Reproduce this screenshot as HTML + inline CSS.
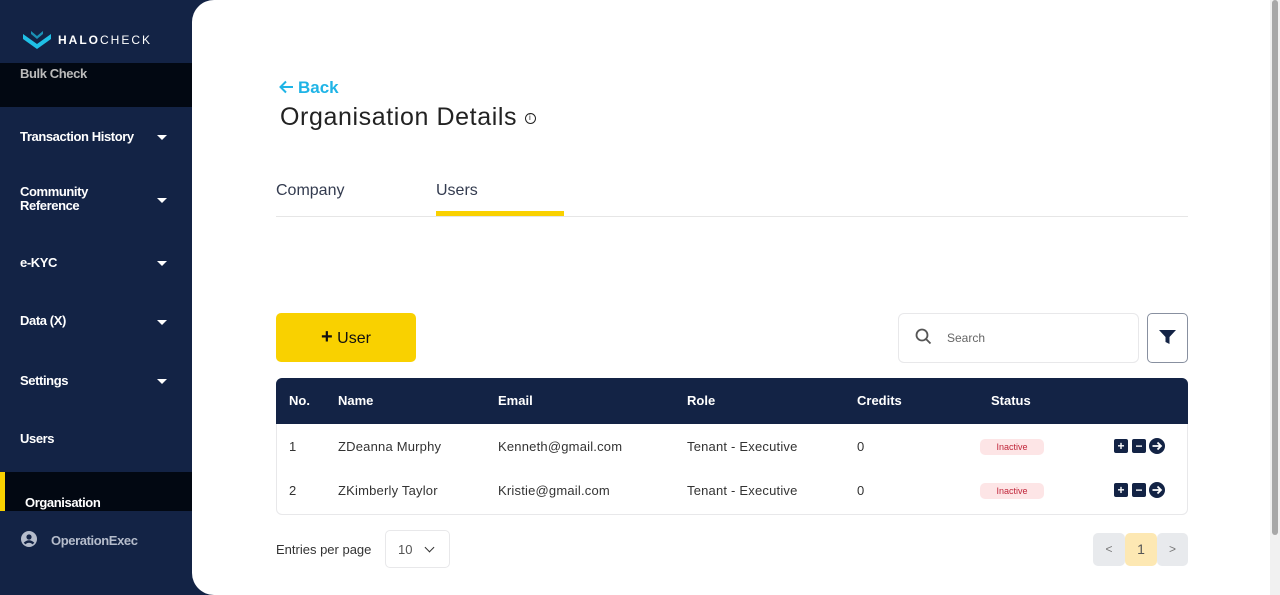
<!DOCTYPE html>
<html><head><meta charset="utf-8"><style>
*{box-sizing:border-box;margin:0;padding:0}
body{width:1280px;height:595px;overflow:hidden;background:#132345;font-family:"Liberation Sans",sans-serif;position:relative}
.sb{position:absolute;left:0;top:0;width:192px;height:595px;background:#132345;color:#fff}
.item{position:absolute;left:20px;font-size:13px;font-weight:bold;color:#fff;letter-spacing:-0.4px}
.car{position:absolute;left:157px;width:0;height:0;border-left:5px solid transparent;border-right:5px solid transparent;border-top:5px solid #fff}
.main{position:absolute;left:192px;top:0;width:1078px;height:595px;background:#fff;border-radius:22px 0 0 22px}
.scroll{position:absolute;left:1270px;top:0;width:10px;height:595px;background:#f1f1f1}
.scroll div{position:absolute;left:2px;top:0;width:6px;height:535px;background:#a8a8a8;border-radius:3px}
.abs{position:absolute}
.badge{position:absolute;width:64px;height:16px;background:#fde5e6;color:#c0263a;font-size:9px;border-radius:5px;text-align:center;line-height:16px}
.ic{position:absolute;width:14px;height:14px;background:#132345;border-radius:2px;color:#fff;font-size:12px;font-weight:bold;text-align:center;line-height:14px}
.ar{position:absolute;width:16px;height:16px}
</style></head><body>
<div class="sb">
 <svg class="abs" style="left:23px;top:31px" width="29" height="19" viewBox="0 0 29 19"><path d="M0 3 L14 13 L28 3 L28 8 L14 18 L0 8Z" fill="#1fc0e6"/><path d="M8 0 L14 5 L20 0 L20 3 L14 8 L8 3Z" fill="#1fc0e6" opacity=".7"/></svg>
 <div class="abs" style="left:58px;top:33px;font-size:12px;color:#fff;letter-spacing:2px"><b>HALO</b>CHECK</div>
 <div class="abs" style="left:0;top:63px;width:192px;height:44px;background:#020812"></div>
 <div class="item" style="top:66px;color:#bbb">Bulk Check</div>
 <div class="item" style="top:129px">Transaction History</div><div class="car" style="top:135px"></div>
 <div class="item" style="top:185px;line-height:14px">Community<br>Reference</div><div class="car" style="top:198px"></div>
 <div class="item" style="top:255px">e-KYC</div><div class="car" style="top:261px"></div>
 <div class="item" style="top:313px">Data (X)</div><div class="car" style="top:320px"></div>
 <div class="item" style="top:373px">Settings</div><div class="car" style="top:379px"></div>
 <div class="item" style="top:431px">Users</div>
 <div class="abs" style="left:0;top:472px;width:192px;height:39px;background:#020812"></div>
 <div class="abs" style="left:0;top:472px;width:5px;height:39px;background:#f9d100"></div>
 <div class="item" style="top:495px;left:25px">Organisation</div>
 <svg class="abs" style="left:21px;top:531px" width="16" height="16" viewBox="0 0 16 16"><circle cx="8" cy="8" r="8" fill="#b5bccb"/><circle cx="8" cy="6" r="2.6" fill="#132345"/><path d="M3.5 12.5 Q8 8.5 12.5 12.5" stroke="#132345" stroke-width="2.4" fill="none"/></svg>
 <div class="item" style="top:533px;left:51px;color:#b5bccb">OperationExec</div>
</div>
<div class="main">
 <svg class="abs" style="left:87px;top:80px" width="15" height="14" viewBox="0 0 15 14"><path d="M14 7H2M7 1.5L1.5 7L7 12.5" stroke="#1fb4e6" stroke-width="2" fill="none"/></svg>
 <div class="abs" style="left:106px;top:78px;color:#1fb4e6;font-size:17px;font-weight:bold">Back</div>
 <div class="abs" style="left:88px;top:103px;color:#222;font-size:25px;letter-spacing:0.6px">Organisation Details <span style="display:inline-block;width:11px;height:11px;border:1.3px solid #222;border-radius:50%;font-size:8px;line-height:8px;text-align:center;vertical-align:middle">i</span></div>
 <div class="abs" style="left:84px;top:182px;color:#333b4f;font-size:16px">Company</div>
 <div class="abs" style="left:244px;top:182px;color:#333b4f;font-size:16px">Users</div>
 <div class="abs" style="left:84px;top:216px;width:912px;height:1px;background:#e6e6e6"></div>
 <div class="abs" style="left:244px;top:211px;width:128px;height:5px;background:#f9d100"></div>
 <div class="abs" style="left:84px;top:313px;width:140px;height:49px;background:#f9d100;border-radius:5px;font-size:16px;color:#111;text-align:center;line-height:49px"><b style="font-size:20px">+</b> User</div>
 <div class="abs" style="left:706px;top:313px;width:241px;height:50px;border:1px solid #e8e8ea;border-radius:6px"></div>
 <svg class="abs" style="left:723px;top:328px" width="17" height="17" viewBox="0 0 17 17"><circle cx="7" cy="7" r="5.5" stroke="#555" stroke-width="1.8" fill="none"/><path d="M11 11 L15.5 15.5" stroke="#555" stroke-width="1.8"/></svg>
 <div class="abs" style="left:755px;top:331px;font-size:12px;color:#666">Search</div>
 <div class="abs" style="left:955px;top:313px;width:41px;height:50px;border:1px solid #8890a0;border-radius:5px"></div>
 <svg class="abs" style="left:967px;top:330px" width="17" height="15" viewBox="0 0 17 15"><path d="M0 0H17L10.5 7V14L6.5 12V7Z" fill="#132345"/></svg>
 <div class="abs" style="left:84px;top:378px;width:912px;height:137px;border:1px solid #e8e8ea;border-radius:6px"></div>
 <div class="abs" style="left:84px;top:378px;width:912px;height:46px;background:#132345;border-radius:6px 6px 0 0"></div>
 <div class="abs" style="top:393px;left:97px;color:#fff;font-size:13px;font-weight:bold">No.</div>
 <div class="abs" style="top:393px;left:146px;color:#fff;font-size:13px;font-weight:bold">Name</div>
 <div class="abs" style="top:393px;left:306px;color:#fff;font-size:13px;font-weight:bold">Email</div>
 <div class="abs" style="top:393px;left:495px;color:#fff;font-size:13px;font-weight:bold">Role</div>
 <div class="abs" style="top:393px;left:665px;color:#fff;font-size:13px;font-weight:bold">Credits</div>
 <div class="abs" style="top:393px;left:799px;color:#fff;font-size:13px;font-weight:bold">Status</div>
 <div style="position:absolute;top:439px;left:0;font-size:13px;color:#333;letter-spacing:0.2px">
  <span class="abs" style="left:97px">1</span><span class="abs" style="left:146px;white-space:nowrap">ZDeanna Murphy</span><span class="abs" style="left:306px">Kenneth@gmail.com</span><span class="abs" style="left:495px;white-space:nowrap">Tenant - Executive</span><span class="abs" style="left:665px">0</span>
 </div>
 <div class="badge" style="left:788px;top:439px">Inactive</div>
 <div style="position:absolute;top:483px;left:0;font-size:13px;color:#333;letter-spacing:0.2px">
  <span class="abs" style="left:97px">2</span><span class="abs" style="left:146px;white-space:nowrap">ZKimberly Taylor</span><span class="abs" style="left:306px">Kristie@gmail.com</span><span class="abs" style="left:495px;white-space:nowrap">Tenant - Executive</span><span class="abs" style="left:665px">0</span>
 </div>
 <div class="badge" style="left:788px;top:483px">Inactive</div>
 <div class="ic" style="left:922px;top:439px">+</div><div class="ic" style="left:940px;top:439px">−</div>
 <svg class="ar" style="left:957px;top:438px" viewBox="0 0 16 16"><circle cx="8" cy="8" r="8" fill="#132345"/><path d="M3.5 8H12M8.5 4.5L12 8L8.5 11.5" stroke="#fff" stroke-width="1.8" fill="none"/></svg>
 <div class="ic" style="left:922px;top:483px">+</div><div class="ic" style="left:940px;top:483px">−</div>
 <svg class="ar" style="left:957px;top:482px" viewBox="0 0 16 16"><circle cx="8" cy="8" r="8" fill="#132345"/><path d="M3.5 8H12M8.5 4.5L12 8L8.5 11.5" stroke="#fff" stroke-width="1.8" fill="none"/></svg>
 <div class="abs" style="left:84px;top:542px;font-size:13px;color:#333">Entries per page</div>
 <div class="abs" style="left:193px;top:530px;width:65px;height:38px;border:1px solid #e8e8ea;border-radius:5px;font-size:13px;color:#555;padding:11px 0 0 12px">10 <span style="display:inline-block;width:7px;height:7px;border-right:1.5px solid #333;border-bottom:1.5px solid #333;transform:rotate(45deg);margin:0 0 3px 10px"></span></div>
 <div class="abs" style="left:901px;top:533px;width:32px;height:33px;background:#e8eaed;border-radius:5px;color:#777;font-size:12px;text-align:center;line-height:33px">&lt;</div>
 <div class="abs" style="left:933px;top:533px;width:32px;height:33px;background:#fde8b3;border-radius:5px;color:#555;font-size:14px;text-align:center;line-height:33px">1</div>
 <div class="abs" style="left:965px;top:533px;width:31px;height:33px;background:#e8eaed;border-radius:5px;color:#777;font-size:12px;text-align:center;line-height:33px">&gt;</div>
</div>
<div class="scroll"><div></div></div>
</body></html>
